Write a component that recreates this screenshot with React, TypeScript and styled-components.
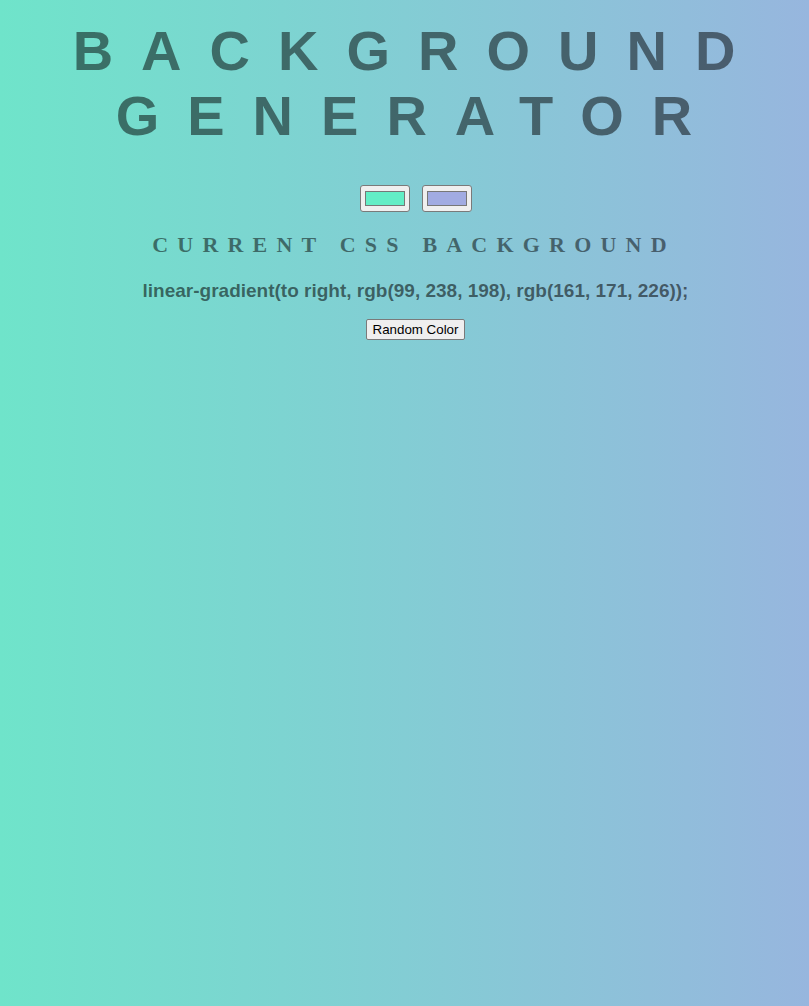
import React, { useState } from 'react';
import styled, { createGlobalStyle } from 'styled-components';

const GlobalStyle = createGlobalStyle`
  html, body {
    margin: 0;
    padding: 0;
  }
  body {
    min-height: 100vh;
    background: linear-gradient(to right, #6fe4ca, #97b6de);
    font-family: 'Liberation Sans', Arial, sans-serif;
  }
`;

const Page = styled.div`
  display: flex;
  flex-direction: column;
  align-items: center;
  padding-left: 22px;
  text-align: center;
  color: rgba(0, 0, 0, 0.5);
  min-height: 100vh;
  box-sizing: border-box;
`;

const Title = styled.h1`
  margin: 18px 0 0;
  padding-left: 5px;
  font: 700 56px/65px 'Liberation Sans', Arial, sans-serif;
  letter-spacing: 28px;
  text-transform: uppercase;
  width: 100%;
`;

const Pickers = styled.div`
  display: flex;
  gap: 12px;
  margin-top: 37px;
`;

const ColorInput = styled.input`
  -webkit-appearance: none;
  appearance: none;
  width: 50px;
  height: 27px;
  margin: 0;
  padding: 0;
  box-sizing: border-box;
  border: 1px solid #7a7a7a;
  border-radius: 3px;
  background: #efefef;
  cursor: pointer;

  &::-webkit-color-swatch-wrapper {
    padding: 5px 4px;
  }
  &::-webkit-color-swatch {
    border: 1px solid #777;
    border-radius: 0;
  }
`;

const Label = styled.h3`
  margin: 20px 0 0;
  padding-right: 3px;
  font: 700 22px/25px 'Liberation Serif', 'Times New Roman', serif;
  letter-spacing: 9.2px;
  text-transform: uppercase;
`;

const Output = styled.h3`
  margin: 23px 0 0;
  font: 700 19px/22px 'Liberation Sans', Arial, sans-serif;
  color: rgba(0, 0, 0, 0.55);
`;

const RandomButton = styled.button`
  margin-top: 17px;
  padding: 1px 6px;
  height: 21px;
  font: 400 13.33px 'Liberation Sans', Arial, sans-serif;
  color: #000;
  background: #efefef;
  border: 1px solid #7a7a7a;
  border-radius: 2px;
  cursor: pointer;
`;

const toRgb = (hex: string) => {
  const n = parseInt(hex.slice(1), 16);
  return `rgb(${(n >> 16) & 255}, ${(n >> 8) & 255}, ${n & 255})`;
};

const randomHex = () =>
  '#' + Math.floor(Math.random() * 0xffffff).toString(16).padStart(6, '0');

const App = () => {
  const [color1, setColor1] = useState('#63eec6');
  const [color2, setColor2] = useState('#a1abe2');

  return (
    <>
      <GlobalStyle />
      <Page>
        <Title>Background Generator</Title>
        <Pickers>
          <ColorInput type="color" value={color1} onChange={e => setColor1(e.target.value)} />
          <ColorInput type="color" value={color2} onChange={e => setColor2(e.target.value)} />
        </Pickers>
        <Label>Current CSS Background</Label>
        <Output>
          linear-gradient(to right, {toRgb(color1)}, {toRgb(color2)});
        </Output>
        <RandomButton
          onClick={() => {
            setColor1(randomHex());
            setColor2(randomHex());
          }}
        >
          Random Color
        </RandomButton>
      </Page>
    </>
  );
};

export default App;
